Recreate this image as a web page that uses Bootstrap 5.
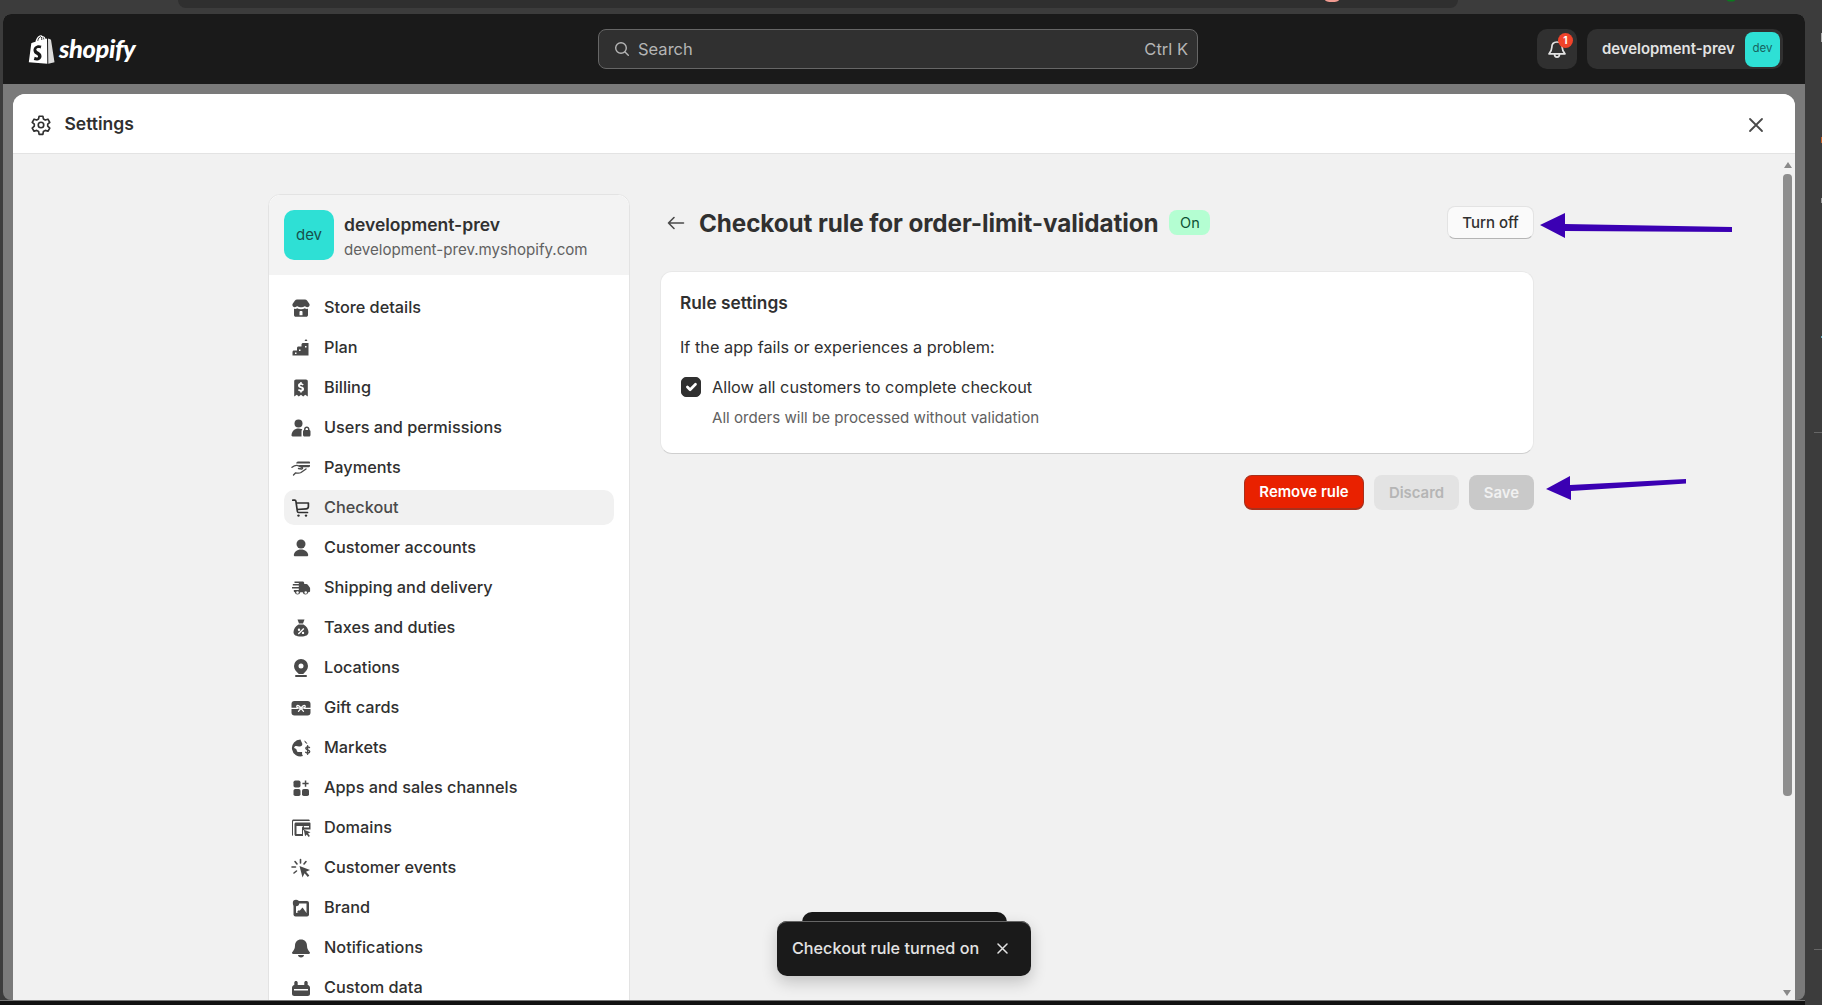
<!DOCTYPE html>
<html lang="en">
<head>
  <meta charset="UTF-8" />
  <meta name="viewport" content="width=device-width, initial-scale=1.0"/>
  <title>Settings | Shopify</title>
  <link href="https://cdn.jsdelivr.net/npm/bootstrap@5.3.3/dist/css/bootstrap.min.css" rel="stylesheet">
  <style>
    html, body {
      height: 100%;
      overflow: hidden;
    }

    body {
      background-color: #3c3c3c;
      font-family: Inter, "Liberation Sans", sans-serif;
      color: #303030;
      font-size: 16px;
    }

    /* browser chrome behind the app */
    .chrome-strip {
      height: 14px;
      padding-left: 178px;
    }

    .chrome-tab {
      width: 1280px;
      height: 8px;
      background-color: #2f2f2f;
      border-radius: 0 0 10px 10px;
    }

    .app-window {
      width: 1802px;
      height: 986px;
      margin-left: 3px;
      background-color: #7a7a7a;
      border-radius: 8px 8px 8px 8px;
      overflow: hidden;
    }

    .top-bar {
      height: 70px;
      background-color: #1a1a1a;
      padding: 0 22px 0 25px;
    }

    .brand-lockup {
      width: 570px;
    }

    .brand-word {
      color: #fff;
      font-family: Lato, sans-serif;
      font-style: italic;
      font-weight: 900;
      font-size: 25.500px;
      letter-spacing: -0.4px;
      line-height: 1;
    }

    .search-box {
      width: 600px;
      height: 40px;
      background-color: #303030;
      border: 1px solid #666;
      border-radius: 8px;
      padding: 0 9px 0 15px;
      color: #b5b5b5;
      font-size: 16.500px;
    }

    .top-actions {
      margin-left: auto;
    }

    .bell-btn {
      width: 40px;
      height: 40px;
      margin-right: 2px;
      background-color: #303030;
      border-radius: 10px;
    }

    .bell-count {
      position: absolute;
      top: 4px;
      right: 4px;
      width: 15px;
      height: 15px;
      border-radius: 50%;
      background-color: #f0432a;
      color: #fff;
      font-size: 10px;
      font-weight: 700;
      line-height: 15px;
      text-align: center;
    }

    .store-pill {
      height: 40px;
      width: 196px;
      background-color: #303030;
      border-radius: 10px;
      padding: 0 3px 0 15px;
      color: #e3e3e3;
      font-weight: 600;
      font-size: 14.900px;
    }

    .store-avatar-sm {
      width: 35px;
      height: 35px;
      background-color: #2ee0d5;
      border-radius: 8px;
      color: #17635e;
      font-size: 11.500px;
      font-weight: 400;
    }

    .settings-modal {
      margin: 10px 10px 0 10px;
      height: 906px;
      background-color: #f1f1f1;
      border-radius: 12px 12px 0 0;
      overflow: hidden;
      position: relative;
    }

    .modal-head {
      height: 60px;
      background-color: #fff;
      border-bottom: 1px solid #e3e3e3;
      padding: 2px 31px 0 17px;
      font-size: 17.500px;
      font-weight: 600;
    }

    .settings-wrap {
      width: 1266px;
      margin-left: 255px;
      padding-top: 40px;
      gap: 30px;
    }

    .side-panel {
      width: 362px;
      flex: none;
      background-color: #fff;
      border: 1px solid #e3e3e3;
      border-radius: 12px 12px 0 0;
    }

    .side-head {
      height: 80px;
      background-color: #f3f3f3;
      border-radius: 12px 12px 0 0;
      padding: 15px;
      gap: 10px;
    }

    .store-avatar {
      width: 50px;
      height: 50px;
      background-color: #2ee0d5;
      border-radius: 10px;
      color: #17504c;
      font-size: 15px;
    }

    .store-name {
      font-size: 17.500px;
      font-weight: 600;
      line-height: 24px;
      margin-top: 3px;
    }

    .store-domain {
      font-size: 15.100px;
      color: #616161;
      line-height: 22px;
      margin-top: 2px;
    }

    .side-nav {
      padding: 15px 15px 0 15px;
    }

    .side-link {
      height: 35px;
      margin-bottom: 5px;
      padding-left: 7px;
      gap: 13px;
      color: #303030;
      font-weight: 500;
      font-size: 16.300px;
      text-decoration: none;
      border-radius: 10px;
    }

    .side-link svg {
      width: 20px;
      height: 20px;
      flex: none;
      fill: #4a4a4a;
    }

    .side-link.is-active {
      background-color: #f1f1f1;
      color: #4a4a4a;
    }

    .main-pane {
      width: 874px;
      flex: none;
    }

    .page-title-row {
      margin-top: 12px;
      height: 33px;
      padding-left: 7px;
    }

    .page-title {
      font-size: 24.250px;
      font-weight: 650;
      letter-spacing: -0.1px;
      margin: 2px 0 0 14px;
      line-height: 33px;
      color: #303030;
    }

    .status-pill {
      margin-left: 11px;
      width: 41px;
      height: 25px;
      background-color: #b4fed2;
      color: #0c5132;
      border-radius: 8px;
      font-size: 14.500px;
    }

    .btn-turn-off {
      margin-left: auto;
      width: 87px;
      height: 33px;
      padding: 2px 0 0;
      font-size: 15px;
      font-weight: 500;
      color: #303030;
      background-color: #fafafa;
      border: 1px solid #e3e3e3;
      border-bottom-color: #b5b5b5;
      border-radius: 8px;
    }

    .rule-box {
      margin-top: 32px;
      height: 183px;
      background-color: #fff;
      border: 1px solid #e8e8e8;
      border-bottom-color: #cfcfcf;
      border-radius: 12px;
      padding: 19px 19px 0 19px;
    }

    .rule-title {
      font-size: 17.300px;
      font-weight: 600;
      line-height: 24px;
    }

    .rule-line {
      margin-top: 20px;
      line-height: 24px;
      font-size: 16.300px;
    }

    .rule-check {
      margin-top: 16px;
      gap: 11px;
      padding-left: 1px;
      line-height: 24px;
      font-size: 16.300px;
    }

    .rule-check .form-check-input {
      width: 20px;
      height: 20px;
      margin: 0;
      background-color: #303030;
      border-color: #303030;
      border-radius: 5px;
      opacity: 1;
    }

    .rule-note {
      margin: 9px 0 0 32px;
      line-height: 20px;
      font-size: 15.100px;
      color: #616161;
    }

    .rule-actions {
      margin-top: 21px;
      gap: 10px;
    }

    .rule-actions .btn {
      height: 35px;
      padding: 1px 0 0;
      font-size: 14.900px;
      font-weight: 600;
      border-radius: 8px;
    }

    .btn-remove {
      width: 120px;
      color: #fff;
      background-color: #e92100;
      border: 1px solid #a8301c;
      border-bottom-width: 2px;
    }

    .btn-discard {
      width: 85px;
      color: #b5b5b5;
      background-color: #e3e3e3;
      border: 0;
    }

    .btn-save {
      width: 65px;
      color: #f1f1f1;
      background-color: #c9c9c9;
      border: 0;
    }

    .fake-scroll {
      position: absolute;
      right: 3px;
      top: 68px;
      width: 9px;
    }

    .scroll-arrow {
      width: 0;
      height: 0;
      margin: 0 auto 6px;
      border-left: 4px solid transparent;
      border-right: 4px solid transparent;
      border-bottom: 6px solid #8a8a8a;
    }

    .scroll-arrow-down {
      position: absolute;
      right: 4px;
      bottom: 4px;
      width: 0;
      height: 0;
      border-left: 4px solid transparent;
      border-right: 4px solid transparent;
      border-top: 6px solid #8a8a8a;
    }

    .scroll-thumb {
      height: 622px;
      background-color: #8e8e8e;
      border-radius: 4px;
    }

    .note-arrow {
      position: absolute;
      left: 0;
      top: 0;
      pointer-events: none;
    }

    .toast-back {
      position: absolute;
      left: 789px;
      top: 818px;
      width: 205px;
      height: 30px;
      background-color: #1a1a1a;
      border-radius: 10px 10px 0 0;
    }

    .toast-front {
      position: absolute;
      left: 764px;
      top: 827px;
      width: 254px;
      height: 55px;
      padding: 0 0 0 15px;
      gap: 18px;
      background-color: #1a1a1a;
      border-radius: 10px;
      box-shadow: inset 0 1px 0 #666, 0 6px 16px rgba(0,0,0,.2);
      color: #e3e3e3;
      font-weight: 550;
      font-size: 16.200px;
    }

    .bottom-edge {
      width: 1805px;
      height: 5px;
      background-color: #111;
      border-top: 1px solid #777;
    }
  </style>
</head>
<body>

  <div class="chrome-strip"><div class="chrome-tab"></div></div>

  <div class="app-window">
    <div class="top-bar d-flex align-items-center">
      <div class="brand-lockup d-flex align-items-center gap-1">
        <svg width="27" height="30" viewBox="0 0 27 30">
          <path fill="#fff" d="M19 4.600 17.700 5c-.5-1.500-1.300-2.700-2.700-2.700h-.3C14.200 1.600 13.600 1.300 13 1.300 9.600 1.300 8 5.600 7.500 7.700L4.300 8.700c-1 .3-1 .3-1.100 1.200L.8 28.200 19.300 29.700z"/>
          <path fill="#fff" d="M20 4.600 20.300 29.700 26.500 28.300 23 5.800c-.1-.4-2.500-.9-3-1.200z" opacity=".85"/>
          <path fill="#1a1a1a" d="M13.500 11.300 12.600 14.400c-2-.9-4.500-.3-4.300 1.300.2 1.800 4.900 2 5.200 6.300.2 3.300-3.100 5.400-7.700 4.100l.9-3.300c1.600 1 3.500 1 3.400-.5-.1-1.800-4.300-1.700-4.600-5.800-.2-3.500 3.700-6.500 8-4.700z"/>
          <path fill="none" stroke="#1a1a1a" stroke-width=".9" d="M9.800 6.800c.3-2 1.500-4 3-4.300M13.800 6c0-1.200-.1-2.200-.5-3M15.800 5.400c-.1-.8-.3-1.500-.7-2"/>
        </svg>
        <span class="brand-word">shopify</span>
      </div>
      <div class="search-box d-flex align-items-center">
        <svg width="16" height="16" viewBox="0 0 16 16" fill="none" stroke="#b5b5b5" stroke-width="1.400" stroke-linecap="round"><circle cx="7" cy="7" r="5.300"/><path d="m11 11 3.300 3.300"/></svg>
        <span class="ms-2">Search</span>
        <span class="ms-auto">Ctrl K</span>
      </div>
      <div class="top-actions d-flex align-items-center gap-2">
        <div class="bell-btn position-relative d-flex align-items-center justify-content-center">
          <svg width="20" height="22" viewBox="0 0 20 22" fill="none" stroke="#e3e3e3" stroke-width="1.700" stroke-linejoin="round"><path d="M10 4c-3.500 0-5.200 2.600-5.200 5.500 0 3-1.300 4.500-2.800 6.300h16c-1.500-1.800-2.800-3.300-2.800-6.300C15.200 6.600 13.500 4 10 4z"/><path d="M7.500 16c0 1.800 1 3.200 2.500 3.200s2.500-1.400 2.500-3.200"/></svg>
          <span class="bell-count">1</span>
        </div>
        <div class="store-pill d-flex align-items-center justify-content-between">
          <span>development-prev</span>
          <span class="store-avatar-sm d-flex align-items-center justify-content-center">dev</span>
        </div>
      </div>
    </div>

    <div class="settings-modal">
      <div class="modal-head d-flex align-items-center gap-2">
        <svg width="22" height="22" viewBox="0 0 20 20" fill="none" stroke="#303030" stroke-width="1.500" stroke-linejoin="round"><path d="M8.300 2h3.400l.5 2.500 1.700 1 2.400-.8 1.700 3-1.900 1.600v1.800l1.900 1.700-1.700 2.900-2.400-.8-1.700 1-.5 2.600H8.300l-.5-2.600-1.700-1-2.400.8-1.700-2.900 1.900-1.700V9.300L2 7.700l1.700-3 2.400.8 1.700-1z"/><circle cx="10" cy="10" r="2.500"/></svg>
        <span>&nbsp;Settings</span>
        <svg class="ms-auto" width="16" height="16" viewBox="0 0 16 16" stroke="#4a4a4a" stroke-width="1.800" stroke-linecap="round"><path d="m2 2 12 12M14 2 2 14"/></svg>
      </div>

      <div class="settings-wrap d-flex align-items-start">
        <div class="side-panel">
          <div class="side-head d-flex">
            <div class="store-avatar d-flex align-items-center justify-content-center">dev</div>
            <div>
              <div class="store-name">development-prev</div>
              <div class="store-domain">development-prev.myshopify.com</div>
            </div>
          </div>
          <nav class="side-nav">
            <a class="side-link d-flex align-items-center" href="#">
              <svg viewBox="0 0 20 20"><path d="M6 1.500h8c.8 0 1.500.4 2 1.100L18.500 6c.6 1.800-.7 3.300-2.300 3.300-1 0-1.800-.5-2.300-1.200-.5.700-1.600 1.200-2.800 1.200H9c-1.200 0-2.300-.5-2.900-1.200-.5.700-1.300 1.200-2.300 1.200C2.200 9.300.9 7.800 1.500 6L4 2.600c.5-.7 1.200-1.100 2-1.100z"/><path fill-rule="evenodd" d="M3 10.800c1.100.3 2.300.1 3.200-.5 1 .6 2.300 1 3.800 1s2.800-.4 3.800-1c.9.600 2.100.8 3.200.5v6.200c0 1-.8 1.800-1.800 1.800H4.800c-1 0-1.800-.8-1.800-1.800zm5.500 3.200v3.200h3V14c0-.5-.4-1-1-1h-1c-.6 0-1 .5-1 1z"/></svg>
              Store details
            </a>
            <a class="side-link d-flex align-items-center" href="#">
              <svg viewBox="0 0 20 20"><path d="M15 1l1.500 2h-3zM12.500 5h5v12.500h-16v-3.500c0-.8.600-1.500 1.500-1.500h3V10c0-.8.600-1.500 1.500-1.500h3V6.500c0-.8.700-1.500 2-1.500z"/><path fill="#fff" d="M4 14.500h1.500V16H4zM8 11.500h1.500V13H8zM14 8h1.500v1.500H14z"/></svg>
              Plan
            </a>
            <a class="side-link d-flex align-items-center" href="#">
              <svg viewBox="0 0 20 20"><path fill-rule="evenodd" d="M5 1.500h10c1 0 1.800.8 1.800 1.800v15.200l-2.600-1.800-2 1.800-2.200-1.800-2.200 1.800-2-1.800-2.600 1.800V3.300C3.200 2.300 4 1.500 5 1.500zM9.200 4v1.100c-1.300.3-2.200 1.200-2.200 2.400 0 1.500 1.300 2.100 2.500 2.500 1 .3 1.400.5 1.400 1 0 .4-.4.700-1 .7-.7 0-1.400-.3-2-.8l-1 1.300c.6.600 1.400 1 2.300 1.200V14.500h1.600v-1.100c1.300-.3 2.200-1.200 2.200-2.500 0-1.500-1.200-2.100-2.500-2.500-1-.3-1.400-.5-1.400-1 0-.4.400-.6.900-.6s1.200.2 1.800.7l.9-1.300c-.6-.5-1.300-.8-2-1V4z"/></svg>
              Billing
            </a>
            <a class="side-link d-flex align-items-center" href="#">
              <svg viewBox="0 0 20 20"><circle cx="7.500" cy="5.500" r="4"/><path d="M7.500 10.500c-3.800 0-6.700 2.500-7 6.800-.1.700.5 1.200 1.100 1.200h8.900v-5.200c0-.8.300-1.500.8-2-1.200-.5-2.900-.8-4.800-.8z"/><path fill-rule="evenodd" d="M15.800 8.500c-1.600 0-2.800 1.200-2.800 2.800v.7c-.6.200-1 .8-1 1.500v3.500c0 .8.700 1.500 1.500 1.500h4.600c.8 0 1.400-.7 1.400-1.500v-3.500c0-.7-.4-1.300-1-1.500v-.7c0-1.600-1.200-2.800-2.700-2.800zm0 1.500c.7 0 1.200.6 1.200 1.300v.7h-2.500v-.7c0-.7.600-1.300 1.300-1.300z"/></svg>
              Users and permissions
            </a>
            <a class="side-link d-flex align-items-center" href="#">
              <svg viewBox="0 0 20 20"><path d="M7 3.500h11.200c.5 0 .8.300.8.800v1.200H5.200C5.400 4.300 6 3.500 7 3.500zM7.500 7H19v1c0 .7-.5 1.200-1.200 1.200H9.700z"/><path fill="none" stroke="#4a4a4a" stroke-width="1.400" stroke-linecap="round" d="M1 9.300c2-1.500 4-2.400 6-1.600l4 1.600c1 .5.600 1.900-.5 1.700L7.500 10.500M15 11l-5 3.500c-2 1.200-3.500.5-5.500.5L2.500 17"/></svg>
              Payments
            </a>
            <a class="side-link is-active d-flex align-items-center" href="#">
              <svg viewBox="0 0 20 20"><path fill="none" stroke="#303030" stroke-width="1.700" stroke-linecap="round" stroke-linejoin="round" d="M1.800 2.200h2c.6 0 1 .4 1.100 1l1.500 10.300c.1.600.5 1 1.100 1h9M5.200 5h12.200v3.500c0 1.200-.9 2.200-2.100 2.300L6 11.500"/><circle cx="7.500" cy="17.600" r="1.200" fill="#303030"/><circle cx="15" cy="17.600" r="1.200" fill="#303030"/></svg>
              Checkout
            </a>
            <a class="side-link d-flex align-items-center" href="#">
              <svg viewBox="0 0 20 20"><circle cx="10" cy="6" r="4.500"/><path d="M10 11.500c-4.200 0-7 2.500-7.200 5.500 0 .8.500 1.300 1.300 1.300h11.800c.8 0 1.300-.5 1.300-1.300-.2-3-3-5.500-7.200-5.500z"/></svg>
              Customer accounts
            </a>
            <a class="side-link d-flex align-items-center" href="#">
              <svg viewBox="0 0 20 20"><path fill-rule="evenodd" d="M3.500 3.500h8c1 0 1.700.7 1.700 1.700v.8h2c.7 0 1.200.3 1.600.8l2 2.700c.2.300.3.600.3 1v2.500c0 .7-.5 1.200-1.200 1.200h-.7a2.800 2.800 0 0 1-5.500 0H9.300a2.800 2.800 0 0 1-5.500 0 1 1 0 0 1-1-1V12h5V10.500H1V9h6.800V7.500H1.800V6h6V5H3.500zM6.500 13.200a1.300 1.300 0 1 0 0 2.600 1.300 1.300 0 0 0 0-2.600zm8.200 0a1.300 1.300 0 1 0 0 2.600 1.300 1.300 0 0 0 0-2.600z"/></svg>
              Shipping and delivery
            </a>
            <a class="side-link d-flex align-items-center" href="#">
              <svg viewBox="0 0 20 20"><path fill-rule="evenodd" d="M6.500 1.500h7l-1.500 4h-4zM7.500 6.500h5c3 1.800 5 4.700 5 7.500 0 3-2.500 4.500-7.500 4.500S2.500 17 2.500 14c0-2.800 2-5.700 5-7.500zM8 10.500a1.200 1.200 0 1 0 0 2.400 1.200 1.200 0 0 0 0-2.400zm4 3.200a1.200 1.200 0 1 0 0 2.400 1.200 1.200 0 0 0 0-2.400zM12.300 10 6.800 15.500l1 1 5.500-5.500z"/></svg>
              Taxes and duties
            </a>
            <a class="side-link d-flex align-items-center" href="#">
              <svg viewBox="0 0 20 20"><path fill-rule="evenodd" d="M10 1a7 7 0 0 0-7 7c0 3 2 5.500 4.800 8h4.400C15 13.500 17 11 17 8a7 7 0 0 0-7-7zm0 4.500a2.500 2.500 0 1 1 0 5 2.500 2.500 0 0 1 0-5z"/><rect x="4" y="17" width="12" height="2" rx="1"/></svg>
              Locations
            </a>
            <a class="side-link d-flex align-items-center" href="#">
              <svg viewBox="0 0 20 20"><rect x="0.500" y="3" width="19" height="14.500" rx="3"/><path fill="none" stroke="#fff" stroke-width="1.300" stroke-linecap="round" d="M0.500 10.300h6M13.500 10.300h6M10 10.300C8.500 7.500 5.800 6.500 5.800 8.500c0 1.800 2.500 1.800 4.200 1.800s4.200 0 4.200-1.800c0-2-2.700-1-4.200 1.800zM10 10.300l-2.500 3M10 10.300l2.500 3"/></svg>
              Gift cards
            </a>
            <a class="side-link d-flex align-items-center" href="#">
              <svg viewBox="0 0 20 20"><path d="M9.500 1.500a8.500 8.500 0 1 0 2.500 16.600c-.9-1.100-1.200-2.600-.8-4H7.500c-1.100 0-1.700-.8-1.700-1.600 0-1.200-1-2-2.700-2.500C3.500 7 6 8 8 8.500c2 .5 3.800-1 3.200-2.900C10.800 4.300 9.800 3 9.500 1.500zM13.500 2.500c-.4 1.500 1 2.500 3 3.600-.6-1.500-1.700-2.800-3-3.600z"/><path fill="none" stroke="#4a4a4a" stroke-width="1.400" stroke-linecap="round" d="M18.500 9.500c-1.300-1.100-3.700-.8-3.700.8 0 2 3.900 1.200 3.900 3.300 0 1.700-2.600 1.900-4 .7M16.600 7.800v8.500"/></svg>
              Markets
            </a>
            <a class="side-link d-flex align-items-center" href="#">
              <svg viewBox="0 0 20 20"><rect x="2.500" y="2.500" width="7" height="7" rx="1.800"/><rect x="2.500" y="11" width="7" height="7" rx="1.800"/><rect x="11" y="11" width="7" height="7" rx="1.800"/><path d="M13.800 2.500h1.500v2.300h2.300v1.500h-2.300v2.400h-1.500V6.300h-2.400V4.800h2.400z"/></svg>
              Apps and sales channels
            </a>
            <a class="side-link d-flex align-items-center" href="#">
              <svg viewBox="0 0 20 20"><path d="M2.500 1.500h15c.8 0 1.300.5 1.300 1.500H3c-.6 0-1 .4-1 1v14c-.6-.2-1-.7-1-1.300V3c0-.8.700-1.500 1.500-1.500z"/><path fill-rule="evenodd" d="M5 4.500h13.500c.6 0 1 .4 1 1v6h-6l-1.500 1v5.500H5c-.8 0-1.500-.7-1.500-1.500V6c0-.8.700-1.500 1.500-1.500zM5.500 8v8H11V10c0-1.100.9-2 2-2zm7.500 0v1.500h5V8z"/><path d="M12.800 11.800 19.500 14.300 17 15.500l1.900 2.600-1.300.9-1.800-2.600-1.700 1.900z"/></svg>
              Domains
            </a>
            <a class="side-link d-flex align-items-center" href="#">
              <svg viewBox="0 0 20 20"><path d="M8.500 8 19 12l-4 1.800 3.300 3.700-1.500 1.400-3.300-3.700-2 4.200z"/><path fill="none" stroke="#4a4a4a" stroke-width="1.600" stroke-linecap="round" d="M9.500 1.500V5M4 3.500 6 6M15 3.500 13 6M1 9h3.500M5.500 13 3 15"/></svg>
              Customer events
            </a>
            <a class="side-link d-flex align-items-center" href="#">
              <svg viewBox="0 0 20 20"><rect x="2.500" y="3" width="15.500" height="15.500" rx="2"/><rect x="5" y="5.500" width="10.500" height="9.500" fill="#fff"/><circle cx="5" cy="5" r="3.200"/><path d="M5 17 11.500 9.500 17 17z"/><path d="M5.500 14.500 8 12l2 2.500z"/></svg>
              Brand
            </a>
            <a class="side-link d-flex align-items-center" href="#">
              <svg viewBox="0 0 20 20"><path d="M10 1.500c-3.700 0-6 2.700-6 6.200 0 3.300-1.500 4.800-2.800 6.600-.5.700 0 1.700.9 1.700h15.800c.9 0 1.400-1 .9-1.700C17.500 12.500 16 11 16 7.700c0-3.500-2.300-6.200-6-6.200z"/><path d="M7 17h6c0 1.500-1.300 2.500-3 2.500S7 18.500 7 17z"/></svg>
              Notifications
            </a>
            <a class="side-link d-flex align-items-center" href="#">
              <svg viewBox="0 0 20 20"><path fill-rule="evenodd" d="M5 3c1 0 1.700.7 1.700 1.500V7h6.600V4.500C13.300 3.700 14 3 15 3s1.700.7 1.700 1.500V7c1.300.3 2.300 1.300 2.300 2.700v6c0 1.300-1 2.300-2.300 2.300H3.300C2 18 1 17 1 15.700v-6C1 8.300 2 7.300 3.300 7V4.500C3.300 3.700 4 3 5 3zM3 11v1.500h14V11z"/></svg>
              Custom data
            </a>
          </nav>
        </div>

        <div class="main-pane">
          <div class="page-title-row d-flex align-items-center">
            <svg width="18" height="14" viewBox="0 0 18 14" fill="none" stroke="#4a4a4a" stroke-width="1.600" stroke-linecap="round" stroke-linejoin="round"><path d="M16.500 7H1.500M7 1.500 1.500 7 7 12.500"/></svg>
            <h1 class="page-title">Checkout rule for order-limit-validation</h1>
            <span class="status-pill d-flex align-items-center justify-content-center">On</span>
            <button class="btn btn-turn-off" type="button">Turn off</button>
          </div>

          <div class="rule-box">
            <div class="rule-title">Rule settings</div>
            <div class="rule-line">If the app fails or experiences a problem:</div>
            <div class="rule-check d-flex align-items-center">
              <input class="form-check-input" type="checkbox" id="allow-all" checked>
              <label for="allow-all">Allow all customers to complete checkout</label>
            </div>
            <div class="rule-note">All orders will be processed without validation</div>
          </div>

          <div class="rule-actions d-flex justify-content-end">
            <button class="btn btn-remove" type="button">Remove rule</button>
            <button class="btn btn-discard" type="button">Discard</button>
            <button class="btn btn-save" type="button">Save</button>
          </div>
        </div>
      </div>

      <div class="fake-scroll">
        <div class="scroll-arrow"></div>
        <div class="scroll-thumb"></div>
      </div>
      <div class="scroll-arrow-down"></div>

      <div class="toast-back"></div>
      <div class="toast-front d-flex align-items-center">
        <span>Checkout rule turned on</span>
        <svg width="11" height="11" viewBox="0 0 11 11" stroke="#e3e3e3" stroke-width="1.500" stroke-linecap="round"><path d="m1 1 9 9M10 1l-9 9"/></svg>
      </div>
    </div>
  </div>

  <!-- annotation arrows and the bits of desktop peeking round the window -->
  <svg class="note-arrow" width="1822" height="1005" viewBox="0 0 1822 1005">
    <path fill="#3b00b3" d="M1540 225 1565 213 1565 224 1732 227 1732 232 1565 231 1565 238z"/>
    <path fill="#3b00b3" d="M1546 489 1570 476 1570 485 1686 479 1686 483.500 1571 491 1571 500z"/>
    <ellipse cx="1332" cy="0" rx="7" ry="2" fill="#f09a90"/>
    <ellipse cx="1731" cy="0" rx="4" ry="1.500" fill="#0a7a1e"/>
    <rect x="1821" y="33" width="1" height="9" fill="#aaa"/>
    <rect x="1821" y="137" width="1" height="6" fill="#c8622a"/>
    <rect x="1821" y="198" width="1" height="5" fill="#999"/>
    <rect x="1821" y="336" width="1" height="2" fill="#6ab"/>
    <rect x="1814" y="432" width="8" height="1" fill="#666"/>
    <rect x="1814" y="949" width="8" height="1" fill="#666"/>
  </svg>

  <div class="bottom-edge"></div>

  <script src="https://cdn.jsdelivr.net/npm/bootstrap@5.3.3/dist/js/bootstrap.bundle.min.js"></script>
</body>
</html>
